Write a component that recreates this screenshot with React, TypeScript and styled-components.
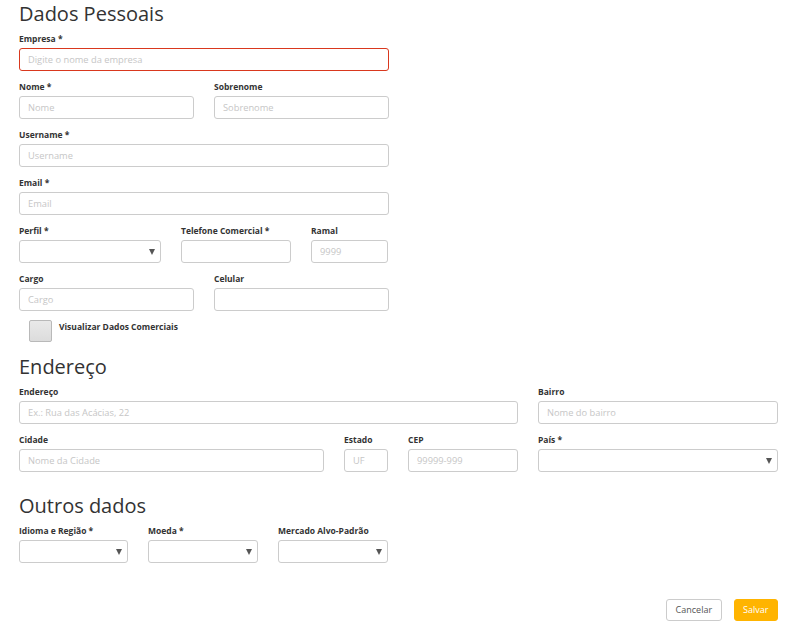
import React from "react";
import styled, { createGlobalStyle } from "styled-components";

const GlobalStyle = createGlobalStyle`
  html, body { margin: 0; padding: 0; background: #fff; }
  body { font-family: "Open Sans", "Noto Sans", sans-serif; color: #333; }
  * { box-sizing: border-box; }
`;

const Page = styled.div`
  padding: 2px 19px 0 19px;
  width: 797px;
`;

const Section = styled.section<{ $top?: number }>`
  margin-top: ${(p) => p.$top ?? 0}px;
`;

const Title = styled.h2`
  margin: 0 0 5px 0;
  font-size: 20px;
  line-height: 24px;
  font-weight: 400;
  color: #333;
`;

const Grid = styled.div<{ $cols: string }>`
  display: grid;
  grid-template-columns: ${(p) => p.$cols};
  column-gap: 20px;
  margin-bottom: 8px;
`;

const Field = styled.div`
  display: flex;
  flex-direction: column;
`;

const Label = styled.label`
  font-size: 8.5px;
  line-height: 14px;
  font-weight: 700;
  color: #333;
  padding-top: 1px;
  margin-bottom: 2px;
  white-space: nowrap;
`;

const Input = styled.input<{ $error?: boolean }>`
  height: 23px;
  width: 100%;
  border: 1px solid ${(p) => (p.$error ? "#d9381e" : "#cccccc")};
  border-radius: 3px;
  padding: 0 8px;
  font-family: "Open Sans", sans-serif;
  font-size: 9.3px;
  color: #333;
  background: #fff;
  outline: none;
  &::placeholder { color: #c6c6c6; }
`;

const SelectBox = styled.div`
  position: relative;
  height: 23px;
  width: 100%;
  border: 1px solid #cccccc;
  border-radius: 3px;
  background: #fff;
  &::after {
    content: "";
    position: absolute;
    right: 5px;
    top: 8px;
    border-left: 3px solid transparent;
    border-right: 3px solid transparent;
    border-top: 6px solid #555;
  }
`;

const CheckRow = styled.div`
  display: flex;
  align-items: flex-start;
  gap: 7px;
  padding-left: 10px;
  margin-top: 1px;
`;

const CheckBox = styled.span`
  display: block;
  width: 23px;
  height: 22px;
  margin-top: 1px;
  border: 1px solid #b9b9b9;
  border-radius: 2px;
  background: linear-gradient(#e9e9e9, #dcdcdc);
`;

const CheckLabel = styled.span`
  font-size: 8.5px;
  line-height: 14px;
  padding-top: 1px;
  font-weight: 700;
  color: #333;
`;

const Footer = styled.div`
  display: flex;
  justify-content: flex-end;
  gap: 12px;
  margin-top: 36px;
`;

const Button = styled.button<{ $primary?: boolean }>`
  height: 22px;
  padding: 0 8.5px;
  border-radius: 3px;
  font-family: "Open Sans", sans-serif;
  font-size: 9px;
  line-height: 20px;
  cursor: pointer;
  border: 1px solid ${(p) => (p.$primary ? "#ffb400" : "#cccccc")};
  background: ${(p) => (p.$primary ? "#ffb400" : "#fff")};
  color: ${(p) => (p.$primary ? "#fff" : "#555")};
`;

const TextField = ({ label, placeholder, error }: { label: string; placeholder?: string; error?: boolean }) => (
  <Field>
    <Label>{label}</Label>
    <Input placeholder={placeholder} $error={error} />
  </Field>
);

const SelectField = ({ label }: { label: string }) => (
  <Field>
    <Label>{label}</Label>
    <SelectBox />
  </Field>
);

export default function App() {
  return (
    <>
      <GlobalStyle />
      <Page>
        <Section>
          <Title>Dados Pessoais</Title>
          <Grid $cols="370px">
            <TextField label="Empresa *" placeholder="Digite o nome da empresa" error />
          </Grid>
          <Grid $cols="175px 175px">
            <TextField label="Nome *" placeholder="Nome" />
            <TextField label="Sobrenome" placeholder="Sobrenome" />
          </Grid>
          <Grid $cols="370px">
            <TextField label="Username *" placeholder="Username" />
          </Grid>
          <Grid $cols="370px">
            <TextField label="Email *" placeholder="Email" />
          </Grid>
          <Grid $cols="142px 110px 77px">
            <SelectField label="Perfil *" />
            <TextField label="Telefone Comercial *" />
            <TextField label="Ramal" placeholder="9999" />
          </Grid>
          <Grid $cols="175px 175px">
            <TextField label="Cargo" placeholder="Cargo" />
            <TextField label="Celular" />
          </Grid>
          <CheckRow>
            <CheckBox />
            <CheckLabel>Visualizar Dados Comerciais</CheckLabel>
          </CheckRow>
        </Section>

        <Section $top={13}>
          <Title>Endereço</Title>
          <Grid $cols="499px 240px">
            <TextField label="Endereço" placeholder="Ex.: Rua das Acácias, 22" />
            <TextField label="Bairro" placeholder="Nome do bairro" />
          </Grid>
          <Grid $cols="305px 44px 110px 240px">
            <TextField label="Cidade" placeholder="Nome da Cidade" />
            <TextField label="Estado" placeholder="UF" />
            <TextField label="CEP" placeholder="99999-999" />
            <SelectField label="País *" />
          </Grid>
        </Section>

        <Section $top={22}>
          <Title>Outros dados</Title>
          <Grid $cols="109px 110px 110px">
            <SelectField label="Idioma e Região *" />
            <SelectField label="Moeda *" />
            <SelectField label="Mercado Alvo-Padrão" />
          </Grid>
        </Section>

        <Footer>
          <Button>Cancelar</Button>
          <Button $primary>Salvar</Button>
        </Footer>
      </Page>
    </>
  );
}
